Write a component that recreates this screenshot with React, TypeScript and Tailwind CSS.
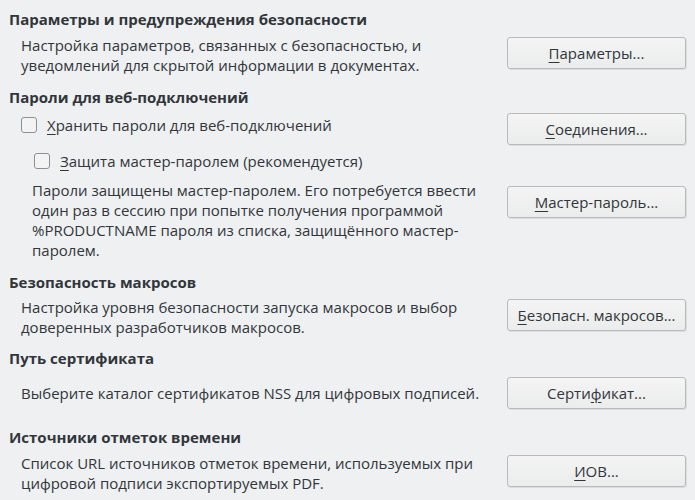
function Btn({ pre, u, post, className = "" }: { pre?: string; u: string; post: string; className?: string }) {
  return (
    <button
      type="button"
      className={`w-[179px] h-[32px] shrink-0 rounded-[3px] border border-[#b8babc] bg-gradient-to-b from-[#f4f4f5] to-[#ebecec] shadow-[1px_1px_0_rgba(0,0,0,0.08)] text-[15px] leading-[20px] text-[#31363b] ${className}`}
    >
      {pre}
      <span className="underline underline-offset-[3px]">{u}</span>
      {post}
    </button>
  );
}

function Check({ u, rest }: { u: string; rest: string }) {
  return (
    <div className="flex items-center">
      <span className="w-[16px] h-[16px] rounded-[3px] border border-[#8d9093] bg-[#f3f3f4]" />
      <span className="ml-[10px]">
        <span className="underline underline-offset-[3px]">{u}</span>
        {rest}
      </span>
    </div>
  );
}

export default function App() {
  return (
    <div
      className="w-[695px] h-[500px] bg-[#eff0f1] text-[#31363b] text-[15px] leading-[20px] overflow-hidden"
      style={{ fontFamily: '"Open Sans", "Noto Sans", sans-serif' }}
    >
      <div className="pt-[9px] pl-[9px] pr-[9px]">
        {/* безопасность */}
        <h2 className="font-bold">Параметры и предупреждения безопасности</h2>
        <div className="flex items-start justify-between mt-[6px]">
          <p className="ml-[12px]">
            Настройка параметров, связанных с безопасностью, и
            <br />
            уведомлений для скрытой информации в документах.
          </p>
          <Btn u="П" post="араметры..." className="mt-[2px]" />
        </div>

        {/* пароли */}
        <h2 className="font-bold mt-[12px]">Пароли для веб-подключений</h2>
        <div className="flex items-start justify-between mt-[6px]">
          <div className="ml-[12px] pt-[2px]">
            <Check u="Х" rest="ранить пароли для веб-подключений" />
          </div>
          <Btn u="С" post="оединения..." />
        </div>
        <div className="ml-[25px] mt-[6px]">
          <Check u="З" rest="ащита мастер-паролем (рекомендуется)" />
        </div>
        <div className="flex items-start justify-between mt-[9px]">
          <p className="ml-[23px]">
            Пароли защищены мастер-паролем. Его потребуется ввести
            <br />
            один раз в сессию при попытке получения программой
            <br />
            %PRODUCTNAME пароля из списка, защищённого мастер-
            <br />
            паролем.
          </p>
          <Btn u="М" post="астер-пароль..." className="mt-[6px]" />
        </div>

        {/* макросы */}
        <h2 className="font-bold mt-[12px]">Безопасность макросов</h2>
        <div className="flex items-start justify-between mt-[5px]">
          <p className="ml-[12px]">
            Настройка уровня безопасности запуска макросов и выбор
            <br />
            доверенных разработчиков макросов.
          </p>
          <Btn u="Б" post="езопасн. макросов..." className="mt-[2px]" />
        </div>

        {/* сертификат */}
        <h2 className="font-bold mt-[11px]">Путь сертификата</h2>
        <div className="flex items-center justify-between mt-[9px]">
          <p className="ml-[12px]">Выберите каталог сертификатов NSS для цифровых подписей.</p>
          <Btn pre="Серти" u="ф" post="икат..." />
        </div>

        {/* время */}
        <h2 className="font-bold mt-[18px]">Источники отметок времени</h2>
        <div className="flex items-start justify-between mt-[6px]">
          <p className="ml-[12px]">
            Список URL источников отметок времени, используемых при
            <br />
            цифровой подписи экспортируемых PDF.
          </p>
          <Btn u="И" post="ОВ..." className="mt-[2px]" />
        </div>
      </div>
    </div>
  );
}
